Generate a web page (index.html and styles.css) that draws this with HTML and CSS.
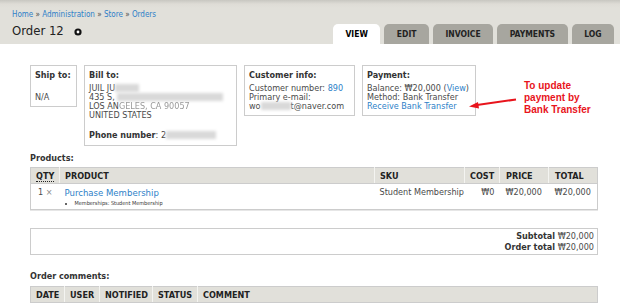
FILE: index.html
```html
<!DOCTYPE html>
<html lang="en">
<head>
    <meta charset="UTF-8">
    <meta name="viewport" content="width=device-width, initial-scale=1.0">
    <title>Order 12</title>
    <link rel="stylesheet" href="styles.css">
</head>
<body>
    <div class="header">
        <div class="header-left">
            <div class="breadcrumb">
                <a href="#">Home</a> » <a href="#">Administration</a> » <a href="#">Store</a> » <a href="#">Orders</a>
            </div>
            <h1>Order 12
                <svg class="title-icon" width="8" height="8" viewBox="0 0 8 8">
                    <circle cx="4" cy="4" r="3.6" fill="#111"/>
                    <circle cx="4" cy="4" r="1.4" fill="#fff"/>
                </svg>
            </h1>
        </div>
        <ul class="tabs">
            <li class="active"><a href="#">VIEW</a></li>
            <li><a href="#">EDIT</a></li>
            <li><a href="#">INVOICE</a></li>
            <li><a href="#">PAYMENTS</a></li>
            <li><a href="#">LOG</a></li>
        </ul>
    </div>

    <div class="content">
        <!-- Order panes -->
        <div class="panes">
            <div class="pane ship">
                <div class="pane-title">Ship to:</div>
                <div class="pane-body"><br>N/A</div>
            </div>
            <div class="pane bill">
                <div class="pane-title">Bill to:</div>
                <div class="pane-body">
                    JUIL JU<span class="blur" style="width:24px"></span><br>
                    435 S, <span class="blur" style="width:106px"></span><br>
                    LOS AN<span class="smudge">GELES, CA 90057</span><br>
                    UNITED STATES<br>
                    <div class="phone"><b>Phone number</b>: 2<span class="blur" style="width:50px"></span></div>
                </div>
            </div>
            <div class="pane customer">
                <div class="pane-title">Customer info:</div>
                <div class="pane-body">
                    Customer number: <a href="#">890</a><br>
                    Primary e-mail:<br>
                    wo<span class="blur" style="width:30px"></span>t@naver.com
                </div>
            </div>
            <div class="pane payment">
                <div class="pane-title">Payment:</div>
                <div class="pane-body">
                    Balance: ₩20,000 (<a href="#">View</a>)<br>
                    Method: Bank Transfer<br>
                    <a href="#">Receive Bank Transfer</a>
                </div>
            </div>
            <div class="note">To update<br>payment by<br>Bank Transfer</div>
            <svg class="note-arrow" width="50" height="14" viewBox="0 0 50 14">
                <line x1="8" y1="9" x2="47" y2="3.5" stroke="#e8141c" stroke-width="2"/>
                <polygon points="0,10.5 9,6 10,12.5" fill="#e8141c"/>
            </svg>
        </div>

        <div class="section-label">Products:</div>
        <table class="grid products">
            <colgroup>
                <col style="width:29px">
                <col style="width:315px">
                <col style="width:90px">
                <col style="width:35px">
                <col style="width:49px">
                <col>
            </colgroup>
            <thead>
                <tr>
                    <th><abbr>QTY</abbr></th>
                    <th>PRODUCT</th>
                    <th>SKU</th>
                    <th class="num">COST</th>
                    <th>PRICE</th>
                    <th>TOTAL</th>
                </tr>
            </thead>
            <tbody>
                <tr>
                    <td class="qty">1 <span class="times">×</span></td>
                    <td>
                        <a href="#">Purchase Membership</a>
                        <ul class="attrs"><li>Memberships: Student Membership</li></ul>
                    </td>
                    <td>Student Membership</td>
                    <td class="num">₩0</td>
                    <td>₩20,000</td>
                    <td>₩20,000</td>
                </tr>
            </tbody>
        </table>

        <div class="totals">
            <div><b>Subtotal</b> ₩20,000</div>
            <div><b>Order total</b> ₩20,000</div>
        </div>

        <div class="section-label">Order comments:</div>
        <table class="grid comments">
            <colgroup>
                <col style="width:34px">
                <col style="width:35px">
                <col style="width:53px">
                <col style="width:45px">
                <col>
            </colgroup>
            <thead>
                <tr>
                    <th>DATE</th>
                    <th>USER</th>
                    <th>NOTIFIED</th>
                    <th>STATUS</th>
                    <th>COMMENT</th>
                </tr>
            </thead>
        </table>
    </div>
</body>
</html>
```

FILE: styles.css
```css
body {
    margin: 0;
    font-family: "DejaVu Sans Condensed", "DejaVu Sans", sans-serif;
    font-size: 9px;
    color: #4a4a4a;
    background: #fff;
}
a {
    color: #2d7fc8;
    text-decoration: none;
}

/* Header */
.header {
    display: flex;
    justify-content: space-between;
    height: 44px;
    box-sizing: border-box;
    padding: 0 6px 0 12px;
    background: linear-gradient(#c8c7c1 0px, #dedcd6 4px, #e1e0da 8px);
}
.header-left {
    padding-top: 10px;
}
.breadcrumb {
    font-size: 8px;
    line-height: 10px;
}
h1 {
    margin: 3px 0 0;
    font-size: 13px;
    line-height: 16px;
    font-weight: normal;
    color: #222;
    display: flex;
    align-items: center;
}
.title-icon {
    margin-left: 10px;
    margin-top: 1px;
}
.tabs {
    list-style: none;
    margin: 0;
    padding: 0;
    display: flex;
    align-items: flex-end;
    gap: 4px;
}
.tabs li {
    height: 20px;
    background: #a7a69f;
    border-radius: 5px 5px 0 0;
}
.tabs li a {
    display: block;
    padding: 0 12.5px;
    line-height: 21px;
    font-size: 8.5px;
    font-weight: bold;
    color: #222;
}
.tabs li.active {
    background: #fff;
}
.tabs li.active a {
    color: #000;
}

/* Content */
.content {
    padding: 21px 22px 0 30px;
}
.panes {
    position: relative;
    display: flex;
    align-items: flex-start;
    gap: 7px;
}
.pane {
    box-sizing: border-box;
    border: 1px solid #ccc;
    padding: 3px 4px 4px;
    line-height: 9px;
    white-space: nowrap;
}
.pane-title {
    font-weight: bold;
    color: #333;
    line-height: 12px;
    margin-bottom: 3px;
}
.ship { width: 47px; }
.bill { width: 153px; }
.customer { width: 111px; }
.payment { width: 114px; }
.phone {
    margin-top: 9px;
    line-height: 12px;
    color: #444;
}
.phone b {
    color: #333;
}
.blur {
    display: inline-block;
    height: 8px;
    vertical-align: -1px;
    background: #d9d9d9;
    filter: blur(1.5px);
}
.smudge {
    color: #999;
    filter: blur(0.6px);
}
.note {
    margin: 15px 0 0 41px;
    font-family: "Liberation Sans", Arial, sans-serif;
    font-size: 10px;
    font-weight: bold;
    line-height: 12px;
    color: #e8141c;
}
.note-arrow {
    position: absolute;
    left: 439px;
    top: 31px;
}

.section-label {
    font-weight: bold;
    color: #333;
    line-height: 12px;
    margin: 6px 0 3px;
}
.grid {
    width: 100%;
    table-layout: fixed;
    border-collapse: collapse;
    border: 1px solid #ccc;
    box-shadow: 0 1px 0 #e6e6e6;
}
.grid th {
    background: #e1e0da;
    border-bottom: 1px solid #ccc;
    border-left: 1px solid #f4f4f1;
    height: 15px;
    padding: 0 5px;
    text-align: left;
    font-weight: bold;
    color: #222;
    white-space: nowrap;
}
.grid th:first-child {
    border-left: none;
}
.grid td {
    vertical-align: top;
    padding: 3px 5px 0;
    height: 22px;
    line-height: 11px;
    white-space: nowrap;
}
.grid .num {
    text-align: right;
}
.grid abbr {
    border-bottom: 1px dotted #222;
    text-decoration: none;
}
.products th:nth-child(5),
.products th:nth-child(6),
.products td:nth-child(5),
.products td:nth-child(6) {
    padding-left: 6px;
}
.qty {
    padding-left: 7px !important;
}
.times {
    color: #888;
}
.products td a {
    font-size: 9.5px;
}
.attrs {
    margin: 0;
    padding-left: 10px;
    font-size: 5.5px;
    line-height: 8px;
    color: #333;
}
.totals {
    margin-top: 18px;
    border: 1px solid #ccc;
    padding: 2px 3px 1px;
    text-align: right;
    line-height: 11px;
}
.totals b {
    color: #333;
}
.totals + .section-label {
    margin-top: 15px;
    margin-bottom: 4px;
}
```
